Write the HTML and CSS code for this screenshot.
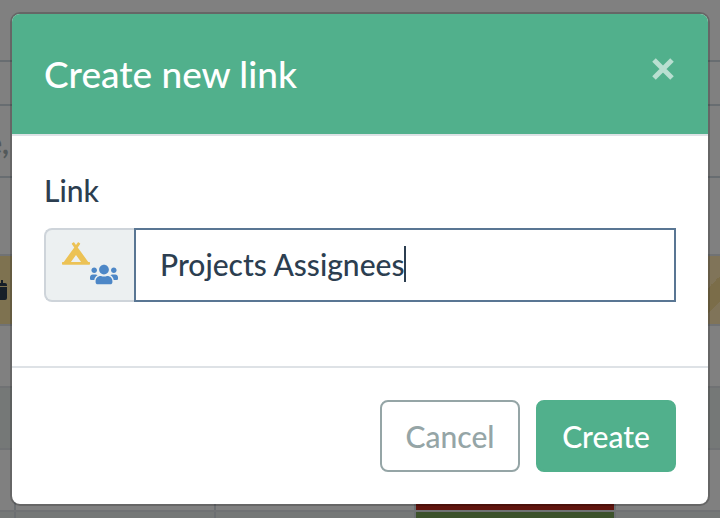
FILE: index.html
```html
<!DOCTYPE html>
<html lang="en">
<head>
<meta charset="utf-8">
<meta name="viewport" content="width=device-width, initial-scale=1">
<title>Create new link</title>
<link rel="stylesheet" href="styles.css">
</head>
<body>
<div class="stage">
  <div class="sheet" aria-hidden="true">
    <div class="row toolbar"></div>
    <div class="row tabs"></div>
    <div class="row heading"><span class="cut-text">e,</span></div>
    <div class="row plain"></div>
    <div class="row highlight">
      <svg class="calendar" viewBox="0 0 18 20"><path d="M4 0h2v3h6V0h2v3h2q2 0 2 2v1H0V5q0-2 2-2h2zM0 7h18v11q0 2-2 2H2q-2 0-2-2z"/></svg>
      <span class="stripes"></span>
    </div>
    <div class="row group"></div>
    <div class="row shaded"></div>
    <div class="row cells"><span></span><span></span><span></span><span class="red"></span><span></span></div>
    <div class="row cells last"><span></span><span></span><span></span><span class="green"></span><span></span></div>
  </div>
  <form class="modal" role="dialog" aria-labelledby="title">
    <header class="modal-header">
      <h1 id="title">Create new link</h1>
      <button class="close" type="button" aria-label="Close">
        <svg viewBox="0 0 22 22"><path d="M2 2l18 18M20 2L2 20"/></svg>
      </button>
    </header>
    <div class="modal-body">
      <label class="label" for="link">Link</label>
      <div class="input-group">
        <span class="addon">
          <svg class="tent" viewBox="0 0 640 512"><path d="M624 448h-24.680L359.540 117.750l53.410-73.550c5.190-7.150 3.610-17.160-3.540-22.350l-25.900-18.790c-7.150-5.190-17.150-3.610-22.350 3.550L320 63.300 278.830 6.600c-5.190-7.150-15.200-8.740-22.350-3.550l-25.880 18.800c-7.150 5.190-8.740 15.200-3.540 22.350l53.410 73.550L40.680 448H16c-8.840 0-16 7.160-16 16v32c0 8.840 7.160 16 16 16h608c8.840 0 16-7.160 16-16v-32c0-8.840-7.160-16-16-16zM320 288l116.360 160H203.640L320 288z"/></svg>
          <svg class="users" viewBox="0 0 640 512"><path d="M96 224c35.300 0 64-28.700 64-64s-28.700-64-64-64-64 28.700-64 64 28.700 64 64 64zm448 0c35.300 0 64-28.700 64-64s-28.700-64-64-64-64 28.700-64 64 28.700 64 64 64zm32 32h-64c-17.600 0-33.500 7.100-45.100 18.600 40.300 22.100 68.900 62 75.100 109.400h66c17.700 0 32-14.300 32-32v-32c0-35.300-28.700-64-64-64zm-256 0c61.900 0 112-50.100 112-112S381.900 32 320 32 208 82.100 208 144s50.100 112 112 112zm76.800 32h-8.300c-20.800 10-43.900 16-68.500 16s-47.600-6-68.500-16h-8.300C179.600 288 128 339.600 128 403.200V432c0 26.500 21.500 48 48 48h288c26.500 0 48-21.500 48-48v-28.800c0-63.600-51.600-115.200-115.200-115.200zm-223.700-13.400C161.500 263.100 145.600 256 128 256H64c-35.300 0-64 28.700-64 64v32c0 17.700 14.300 32 32 32h65.900c6.300-47.400 34.900-87.300 75.200-109.400z"/></svg>
        </span>
        <div class="field">
          <input id="link" type="text" value="Projects Assignees" autocomplete="off" spellcheck="false">
          <span class="caret"></span>
        </div>
      </div>
    </div>
    <footer class="modal-footer">
      <button class="btn outline" type="button">Cancel</button>
      <button class="btn primary" type="submit">Create</button>
    </footer>
  </form>
</div>
</body>
</html>
```

FILE: styles.css
```css
* { box-sizing: border-box; }

body {
  margin: 0;
  background: #808080;
  color: #2c3e50;
  font: 500 30px/44px Lato, "Liberation Sans", sans-serif;
}

.stage {
  display: grid;
  grid-template-columns: minmax(0, 1fr);
  height: 100vh;
  overflow: hidden;
}

/* Dimmed table behind the dialog */
.sheet {
  grid-area: 1 / 1;
  min-height: 0;
}

.row {
  display: flex;
  height: 62px;
  overflow: hidden;
  border-bottom: 2px solid #707274;
}

.toolbar, .tabs, .heading { border-color: #686d71; }
.tabs { height: 44px; }
.heading { height: 72px; }
.plain { height: 78px; }
.highlight {
  height: 70px;
  align-items: center;
  justify-content: space-between;
  background: #7e7250;
}
.shaded { background: #757877; }
.cells.last { background: #757877; }

.cut-text {
  margin: 14px 0 0 -14px;
  color: #53595a;
  font-weight: 700;
}

.calendar {
  width: 18px;
  height: 20px;
  margin-left: -11px;
  fill: #161f28;
}

.stripes {
  width: 12px;
  height: 100%;
  background: linear-gradient(135deg, #807459 0 40%, #7b6d49 40% 72%, #807459 72%);
}

.cells span {
  flex: 0 0 200px;
  border-right: 2px solid #6c6f72;
}
.cells span:first-child { flex-basis: 16px; }
.cells .red { background: #60140e; }
.cells .green { background: #3c522b; }

/* Dialog */
.modal {
  grid-area: 1 / 1;
  align-self: start;
  z-index: 1;
  margin: 12px 10px;
  overflow: hidden;
  border: 2px solid rgba(0, 0, 0, 0.2);
  border-radius: 10px;
  background: #fff;
  background-clip: padding-box;
}

.modal-header {
  display: flex;
  align-items: flex-start;
  justify-content: space-between;
  padding: 32px;
  border-bottom: 2px solid #dee2e6;
  background: #51b08c;
  background-clip: padding-box;
}

.modal-header h1 {
  margin: 0;
  color: #fff;
  font-size: 37px;
  font-weight: 500;
  line-height: 56px;
}

.close {
  display: flex;
  padding: 12px 2px;
  border: 0;
  background: none;
}
.close svg {
  width: 22px;
  height: 22px;
  fill: none;
  stroke: #b9dfd1;
  stroke-width: 5;
}

.modal-body { padding: 32px 32px 64px; }

.label {
  display: block;
  margin-bottom: 16px;
}

.input-group {
  display: flex;
  height: 74px;
}

.addon {
  display: flex;
  width: 90px;
  padding: 12px 16px 14px;
  border: 2px solid #ced4da;
  border-right: 0;
  border-radius: 8px 0 0 8px;
  background: #ecf0f1;
}
.addon svg {
  width: 28px;
  height: 23px;
  flex: none;
}
.tent { fill: #ecc255; }
.users {
  align-self: flex-end;
  fill: #4d87c7;
}

.field {
  display: flex;
  flex: 1;
  align-items: center;
  padding: 0 24px 2px;
  border: 2px solid #597693;
}
.field input {
  field-sizing: content;
  padding: 0;
  border: 0;
  outline: 0;
  background: none;
  color: inherit;
  font: inherit;
}
.caret {
  width: 2px;
  height: 36px;
  background: #2c3e50;
}

.modal-footer {
  display: flex;
  justify-content: flex-end;
  gap: 16px;
  padding: 32px;
  border-top: 2px solid #dee2e6;
}

.btn {
  min-width: 140px;
  padding: 12px 20px;
  border: 2px solid;
  border-radius: 8px;
  font: inherit;
}
.outline {
  border-color: #95a5a6;
  background: #fff;
  color: #95a5a6;
}
.primary {
  border-color: #51b08c;
  background: #51b08c;
  color: #fff;
}
```
